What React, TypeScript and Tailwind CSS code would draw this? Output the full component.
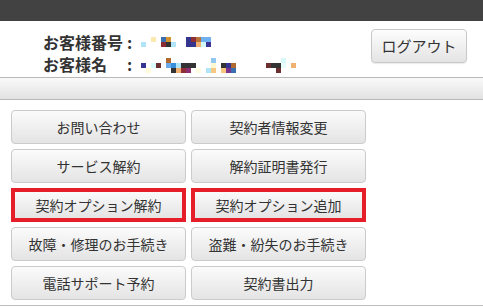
const font = {
  fontFamily: '"Noto Sans CJK JP", "Noto Sans", sans-serif',
};

const menu = [
  { label: "お問い合わせ" },
  { label: "契約者情報変更" },
  { label: "サービス解約" },
  { label: "解約証明書発行" },
  { label: "契約オプション解約", marked: true },
  { label: "契約オプション追加", marked: true },
  { label: "故障・修理のお手続き" },
  { label: "盗難・紛失のお手続き" },
  { label: "電話サポート予約" },
  { label: "契約書出力" },
];

// mosaic blocks standing in for the masked customer data: [x, y, w, color]
const numberBlocks: [number, number, number, string][] = [
  [10, 0, 5, "#fde8b0"],
  [20, 0, 5, "#3a6fb0"],
  [25, 0, 5, "#d4922e"],
  [45, 0, 5, "#35358f"],
  [50, 0, 5, "#8e2f36"],
  [55, 0, 5, "#b8723a"],
  [60, 0, 10, "#6fb0f0"],
  [0, 5, 5, "#b0e4f8"],
  [20, 5, 5, "#8a2c33"],
  [25, 5, 5, "#333333"],
  [30, 5, 5, "#b0e4f8"],
  [45, 5, 10, "#35358f"],
  [55, 5, 5, "#f0b070"],
  [60, 5, 5, "#d0f8f8"],
  [65, 5, 5, "#3c3595"],
];

const nameBlocks: [number, number, number, string][] = [
  [25, 0, 5, "#b06a30"],
  [70, 0, 5, "#90c8f0"],
  [140, 0, 5, "#d8fafa"],
  [0, 5, 5, "#35358f"],
  [10, 5, 5, "#d8fafa"],
  [15, 5, 5, "#6b2f30"],
  [25, 5, 5, "#6aaae8"],
  [30, 5, 5, "#3a90d8"],
  [35, 5, 5, "#b0e4f8"],
  [40, 5, 15, "#333333"],
  [70, 5, 5, "#fff8d0"],
  [80, 5, 5, "#333333"],
  [85, 5, 5, "#353590"],
  [90, 5, 5, "#b06a30"],
  [125, 5, 5, "#6b2f30"],
  [130, 5, 10, "#333333"],
  [140, 5, 5, "#e8fcfc"],
  [150, 5, 5, "#f0b070"],
  [5, 10, 5, "#fffbd8"],
  [30, 10, 5, "#333333"],
  [35, 10, 5, "#f0b070"],
  [40, 10, 5, "#8e2f36"],
  [45, 10, 5, "#8a3070"],
  [55, 10, 5, "#fffbe0"],
  [65, 10, 5, "#b0e4f8"],
  [70, 10, 5, "#f8c880"],
  [80, 10, 5, "#f8c880"],
  [85, 10, 5, "#7a3590"],
  [90, 10, 5, "#3a6fb0"],
  [135, 10, 5, "#6b2f30"],
];

function Mosaic({ blocks, w, h }: { blocks: [number, number, number, string][]; w: number; h: number }) {
  return (
    <svg width={w} height={h} viewBox={`0 0 ${w} ${h}`} className="block">
      {blocks.map(([x, y, bw, c], i) => (
        <rect key={i} x={x} y={y} width={bw} height={5} fill={c} />
      ))}
    </svg>
  );
}

export default function App() {
  return (
    <div className="w-[483px] h-[307px] bg-white overflow-hidden text-[#333]" style={font}>
      {/* top bar */}
      <div className="h-[21px] bg-[#424242]" />

      {/* customer header */}
      <div className="h-[56px] flex justify-between pl-[43px] pr-[16px]">
        <div className="pt-[10px] text-[16px] font-bold leading-[22px]">
          <div className="flex items-center">
            <span className="w-[84px]">お客様番号</span>
            <span className="w-[14px]">:</span>
            <Mosaic blocks={numberBlocks} w={70} h={10} />
          </div>
          <div className="flex items-center">
            <span className="w-[84px]">お客様名</span>
            <span className="w-[14px]">:</span>
            <div className="pt-[2px]">
              <Mosaic blocks={nameBlocks} w={155} h={15} />
            </div>
          </div>
        </div>
        <div className="pt-[8px]">
          <button className="w-[96px] h-[34px] rounded-[4px] border border-[#c8c8c8] bg-linear-to-b from-[#fdfdfd] to-[#e4e4e4] text-[15px] text-[#333] shadow-[0_1px_1px_rgba(0,0,0,0.08)]">
            ログアウト
          </button>
        </div>
      </div>

      {/* sub bar */}
      <div className="h-[23px] border-y border-[#b8b8b8] bg-linear-to-b from-[#fafafa] to-[#e2e2e2]" />

      {/* menu */}
      <div className="pt-[10px] pl-[11px] pb-[5px] border-b border-[#bdbdbd]">
        <div className="grid grid-cols-[175px_175px] gap-x-[5px] gap-y-[5px]">
          {menu.map((m) =>
            m.marked ? (
              <div key={m.label} className="h-[34px] border-[4px] border-[#e61e2a]">
                <button className="w-full h-full bg-linear-to-b from-[#fafafa] to-[#e4e4e4] text-[14px] leading-none text-[#333]">
                  {m.label}
                </button>
              </div>
            ) : (
              <button
                key={m.label}
                className="h-[34px] rounded-[4px] border border-[#cbcbcb] bg-linear-to-b from-[#fbfbfb] to-[#e4e4e4] text-[14px] leading-none text-[#333]"
              >
                {m.label}
              </button>
            )
          )}
        </div>
      </div>
    </div>
  );
}
